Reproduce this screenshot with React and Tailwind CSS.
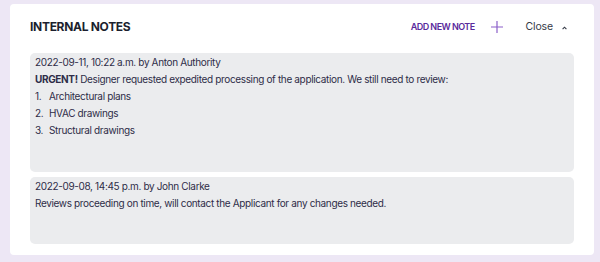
import React from "react";

export default function App() {
  return (
    <div className="w-[600px] h-[262px] bg-[#ede7f5] pt-[4px] pl-[10px]" style={{ fontFamily: "Inter, 'Noto Sans', sans-serif" }}>
      <div className="w-[584px] h-[251px] bg-white rounded-[4px] px-[20px] flex flex-col">
        <div className="h-[46px] mb-[3px] flex items-center justify-between">
          <div className="text-[12px] font-bold tracking-[-0.3px] text-[#1c1f2e]">INTERNAL NOTES</div>
          <div className="flex items-center">
            <span className="text-[9px] font-semibold tracking-[-0.55px] text-[#5a2a9c]">ADD NEW NOTE</span>
            <svg width="12" height="12" viewBox="0 0 12 12" className="ml-[16px]">
              <path d="M6 0v12M0 6h12" stroke="#8b5fc9" strokeWidth="1.2" />
            </svg>
            <span className="ml-[23px] text-[10.5px] tracking-[-0.15px] text-[#353a47]">Close</span>
            <svg width="5" height="4" viewBox="0 0 5 4" className="ml-[9px] mr-[7px] mt-[1px]">
              <path d="M0.6 3.2L2.5 1.2L4.4 3.2" stroke="#353a47" strokeWidth="1.1" fill="none" />
            </svg>
          </div>
        </div>
        <div className="flex flex-col gap-[5px] text-[10px] tracking-[-0.35px] leading-[17px] text-[#2e2c48]">
          <div className="h-[119px] bg-[#ebecee] rounded-[5px] px-[5px] pt-[1px]">
            <div>2022-09-11, 10:22 a.m. by Anton Authority</div>
            <div><span className="font-bold">URGENT!</span> Designer requested expedited processing of the application. We still need to review:</div>
            <ol className="mt-[0px]">
              <li className="flex"><span className="w-[14px]">1.</span>Architectural plans</li>
              <li className="flex"><span className="w-[14px]">2.</span>HVAC drawings</li>
              <li className="flex"><span className="w-[14px]">3.</span>Structural drawings</li>
            </ol>
          </div>
          <div className="h-[67px] bg-[#ebecee] rounded-[5px] px-[5px] pt-[1px]">
            <div>2022-09-08, 14:45 p.m. by John Clarke</div>
            <div>Reviews proceeding on time, will contact the Applicant for any changes needed.</div>
          </div>
        </div>
      </div>
    </div>
  );
}
